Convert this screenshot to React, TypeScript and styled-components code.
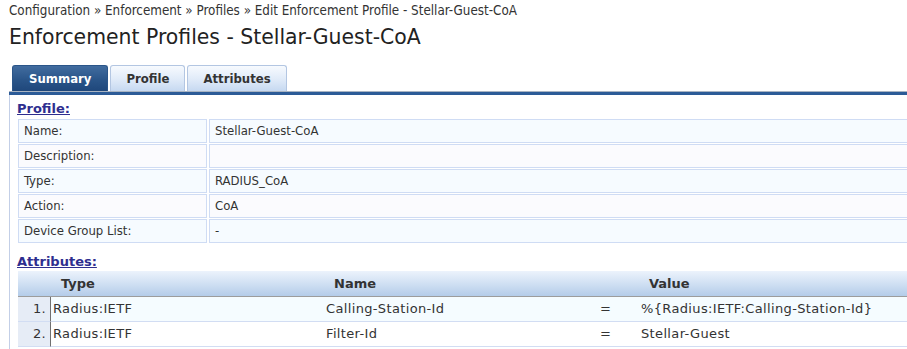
import React from "react";
import styled, { createGlobalStyle } from "styled-components";

const GlobalStyle = createGlobalStyle`
  html, body { margin: 0; padding: 0; background: #fff; overflow: hidden; }
`;

const Page = styled.div`
  width: 1000px;
  min-height: 349px;
  padding: 3px 0 0 9px;
  box-sizing: border-box;
  font-family: "DejaVu Sans Condensed", "DejaVu Sans", sans-serif;
  font-size: 13px;
  color: #333;
  display: flex;
  flex-direction: column;
`;

const Breadcrumb = styled.div`
  font-size: 13.3px;
  line-height: 16px;
  color: #333;
`;

const Title = styled.h1`
  margin: 6px 0 0;
  font-family: "DejaVu Sans", sans-serif;
  font-size: 20.4px;
  font-weight: normal;
  line-height: 24px;
  color: #222;
`;

const TabBar = styled.div`
  display: flex;
  gap: 2px;
  margin-top: 16px;
  padding-left: 3px;
`;

const Tab = styled.div<{ $active?: boolean }>`
  height: 26px;
  box-sizing: border-box;
  padding: 0 ${(p) => (p.$active ? 16 : 15)}px;
  line-height: 26px;
  font-size: 13px;
  font-weight: bold;
  border-radius: 3px 3px 0 0;
  color: ${(p) => (p.$active ? "#fff" : "#333")};
  background: ${(p) =>
    p.$active
      ? "linear-gradient(#416c9f, #2a5589 55%, #1f477b)"
      : "linear-gradient(#f7fafe, #dfeaf8 55%, #c6d9f1)"};
  border: 1px solid ${(p) => (p.$active ? "#2a5589" : "#b3c6e2")};
  border-bottom: none;
`;

const Band = styled.div`
  border-top: 1px solid #a9b4c2;
  height: 3px;
  background: #2c5b97;
`;

const Panel = styled.div`
  flex: 1;
  border-left: 1px solid #c3cfe7;
  padding: 6px 0 0 7px;
`;

const SectionLabel = styled.div`
  font-family: "DejaVu Sans", sans-serif;
  font-weight: bold;
  font-size: 13px;
  line-height: 16px;
  color: #2e2e8f;
  text-decoration: underline;
`;

const InfoGrid = styled.div`
  display: grid;
  grid-template-columns: 189px 1fr;
  gap: 1px 2px;
  margin: 2px 0 0 1px;
`;

const InfoCell = styled.div<{ $alt?: boolean }>`
  height: 24px;
  box-sizing: border-box;
  border: 1px solid #cfdcf4;
  padding-left: 5px;
  line-height: 22px;
  background: ${(p) => (p.$alt ? "#fbfbfe" : "#f6fbff")};
  color: #333;
`;

const AttrSection = styled.div`
  margin-top: 11px;
`;

const AttrTable = styled.div`
  margin: 1px 0 0 1px;
  display: grid;
  grid-template-columns: 33px 273px 276px 39px 1fr;
  font-family: "DejaVu Sans", sans-serif;
  font-size: 13px;
`;

const HeadCell = styled.div`
  height: 26px;
  box-sizing: border-box;
  border-bottom: 1px solid #9c9c9c;
  padding-left: 10px;
  line-height: 25px;
  font-weight: bold;
  color: #333;
  background: linear-gradient(#ecf3fc, #d3e2f4 45%, #b4cce9);
`;

const NumCell = styled.div`
  height: 25px;
  box-sizing: border-box;
  border-bottom: 1px solid #d2ddf3;
  border-right: 1px solid #707070;
  background: #e6ecf6;
  text-align: right;
  padding-right: 4px;
  line-height: 24px;
  letter-spacing: 0.35px;
  color: #333;
`;

const DataCell = styled.div<{ $alt?: boolean; $flush?: boolean }>`
  height: 25px;
  box-sizing: border-box;
  border-bottom: 1px solid #d2ddf3;
  padding-left: ${(p) => (p.$flush ? 0 : 2)}px;
  line-height: 24px;
  letter-spacing: 0.35px;
  white-space: nowrap;
  color: #333;
  background: ${(p) => (p.$alt ? "#ffffff" : "#f5fcff")};
`;

const profile: [string, string][] = [
  ["Name:", "Stellar-Guest-CoA"],
  ["Description:", ""],
  ["Type:", "RADIUS_CoA"],
  ["Action:", "CoA"],
  ["Device Group List:", "-"],
];

const attrs = [
  { type: "Radius:IETF", name: "Calling-Station-Id", value: "%{Radius:IETF:Calling-Station-Id}" },
  { type: "Radius:IETF", name: "Filter-Id", value: "Stellar-Guest" },
];

export default function App() {
  return (
    <>
      <GlobalStyle />
      <Page>
        <Breadcrumb>
          Configuration » Enforcement » Profiles » Edit Enforcement Profile - Stellar-Guest-CoA
        </Breadcrumb>
        <Title>Enforcement Profiles - Stellar-Guest-CoA</Title>
        <TabBar>
          <Tab $active>Summary</Tab>
          <Tab>Profile</Tab>
          <Tab>Attributes</Tab>
        </TabBar>
        <Band />
        <Panel>
          <SectionLabel>Profile:</SectionLabel>
          <InfoGrid>
            {profile.map(([k, v], i) => (
              <React.Fragment key={k}>
                <InfoCell $alt={i % 2 === 1}>{k}</InfoCell>
                <InfoCell $alt={i % 2 === 1}>{v}</InfoCell>
              </React.Fragment>
            ))}
          </InfoGrid>
          <AttrSection>
            <SectionLabel>Attributes:</SectionLabel>
            <AttrTable>
              <HeadCell />
              <HeadCell>Type</HeadCell>
              <HeadCell>Name</HeadCell>
              <HeadCell />
              <HeadCell>Value</HeadCell>
              {attrs.map((a, i) => (
                <React.Fragment key={i}>
                  <NumCell>{i + 1}.</NumCell>
                  <DataCell $alt={i % 2 === 1}>{a.type}</DataCell>
                  <DataCell $alt={i % 2 === 1}>{a.name}</DataCell>
                  <DataCell $alt={i % 2 === 1} $flush>=</DataCell>
                  <DataCell $alt={i % 2 === 1}>{a.value}</DataCell>
                </React.Fragment>
              ))}
            </AttrTable>
          </AttrSection>
        </Panel>
      </Page>
    </>
  );
}
